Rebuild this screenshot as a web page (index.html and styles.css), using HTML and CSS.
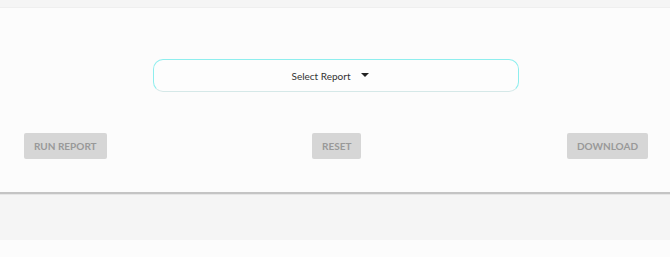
FILE: index.html
```html
<!DOCTYPE html>
<html>
<head>
<meta charset="utf-8">
<link rel="stylesheet" href="styles.css">
</head>
<body>
<div class="top-strip"></div>
<main class="card">
  <div class="select-row">
    <button class="select">
      <span class="select-label">Select Report</span>
      <span class="caret"></span>
    </button>
  </div>
  <div class="actions">
    <button class="btn">RUN REPORT</button>
    <button class="btn">RESET</button>
    <button class="btn">DOWNLOAD</button>
  </div>
</main>
<div class="bottom-strip"></div>
</body>
</html>
```
FILE: styles.css
```css
html, body {
  margin: 0;
  padding: 0;
  background: #fcfcfc;
  font-family: "Open Sans", "Liberation Sans", sans-serif;
}
.top-strip {
  height: 7px;
  background: #f5f5f5;
  border-bottom: 1px solid #efefef;
}
.card {
  background: #fcfcfc;
  height: 186px;
  box-sizing: border-box;
  padding-top: 51px;
  border-bottom: 2px solid #c4c4c4;
}
.select-row {
  display: flex;
  justify-content: center;
  padding-left: 2px;
}
.select {
  width: 366px;
  height: 33px;
  box-sizing: border-box;
  border: 1px solid #8eeeee;
  border-bottom-color: #d5e8e8;
  border-radius: 10px;
  background: #fdfdfd;
  display: flex;
  align-items: center;
  justify-content: center;
  gap: 11px;
  padding: 0 11px 0 0;
  font-family: inherit;
  cursor: pointer;
}
.select-label {
  font-family: "Lato", "Open Sans", sans-serif;
  font-size: 10px;
  color: #333;
}
.caret {
  width: 0;
  height: 0;
  border-left: 4px solid transparent;
  border-right: 4px solid transparent;
  border-top: 4px solid #222;
  margin-bottom: 2px;
}
.actions {
  display: flex;
  justify-content: space-between;
  padding: 0 22px 0 24px;
  margin-top: 41px;
}
.btn {
  height: 26px;
  padding: 0 10px;
  border: none;
  border-radius: 2px;
  background: #d6d6d6;
  color: #999;
  font-family: "Lato", "Open Sans", sans-serif;
  font-size: 10px;
  font-weight: 700;
}
.bottom-strip {
  height: 45px;
  background: #f5f5f5;
  border-top: 1px solid #e6e6e6;
}
```
